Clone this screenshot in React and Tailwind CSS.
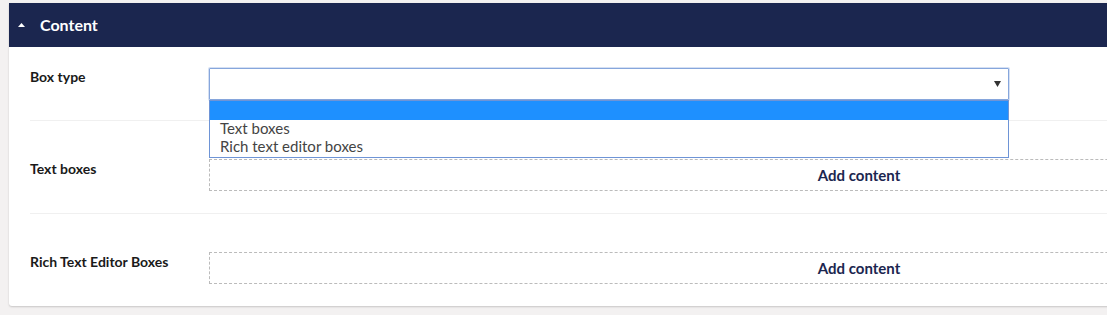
export default function App() {
  return (
    <div className="w-[1107px] h-[315px] overflow-hidden bg-[#f3f1f1] pt-[3px] pl-[9px] font-['Lato','Liberation_Sans',sans-serif]">
      <div className="w-[1521px] bg-white shadow-[0_1px_2px_rgba(0,0,0,0.18)] rounded-b-[3px]">
        {/* Header */}
        <div className="h-[44px] bg-[#1b264f] flex items-center pl-[9px] gap-[15px]">
          <svg width="7" height="4" viewBox="0 0 7 4" className="mt-[-1px]">
            <path d="M0 4 L3.5 0 L7 4 Z" fill="#fff" />
          </svg>
          <span className="text-white font-bold text-[16px] leading-none">Content</span>
        </div>

        <div className="px-[21px]">
          {/* Box type */}
          <div className="flex pt-[21px] pb-[20px] border-b border-[#f0f0f0]">
            <div className="w-[179px] text-[14px] leading-[16px] font-bold text-[#1a1a1a] pt-[1px]">Box type</div>
            <div className="relative w-[800px]">
              <div className="h-[32px] border border-[#86a6dc] shadow-[0_0_0_1px_rgba(134,166,220,0.35)] rounded-[1px] bg-white flex items-center justify-end pr-[7px]">
                <svg width="7" height="6" viewBox="0 0 7 6">
                  <path d="M0 0 H7 L3.5 6 Z" fill="#333" />
                </svg>
              </div>
              <div className="absolute left-0 top-[32px] w-[800px] bg-white border border-[#6e94d6] z-10">
                <div className="h-[19px] bg-[#1e90ff]"></div>
                <div className="pl-[10px] text-[15px] leading-[18px] text-[#444] mt-[-1px]">Text boxes</div>
                <div className="pl-[10px] text-[15px] leading-[18px] text-[#444] pb-[2px]">Rich text editor boxes</div>
              </div>
            </div>
          </div>

          {/* Text boxes */}
          <div className="flex items-center pt-[38px] pb-[22px] border-b border-[#f0f0f0]">
            <div className="w-[179px] text-[14px] leading-[16px] font-bold text-[#1a1a1a] mt-[-12px]">Text boxes</div>
            <div className="flex-1 h-[32px] border border-dashed border-[#bbb] flex items-center justify-center text-[15px] font-bold text-[#1b264f]">
              Add content
            </div>
          </div>

          {/* Rich text editor boxes */}
          <div className="flex items-center pt-[38px] pb-[22px]">
            <div className="w-[179px] text-[14px] leading-[16px] font-bold text-[#1a1a1a] mt-[-13px]">Rich Text Editor Boxes</div>
            <div className="flex-1 h-[32px] border border-dashed border-[#bbb] flex items-center justify-center text-[15px] font-bold text-[#1b264f]">
              Add content
            </div>
          </div>
        </div>
      </div>
    </div>
  );
}
